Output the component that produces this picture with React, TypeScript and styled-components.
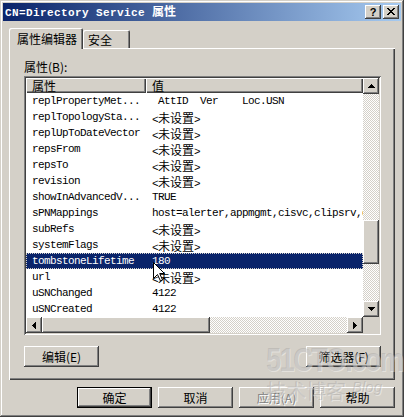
import React from "react";
import styled, { createGlobalStyle, css } from "styled-components";

const FACE = "#d4d0c8";
const CJK = `"Noto Sans CJK SC", "Noto Sans", sans-serif`;
const MONO = `"Liberation Mono", "Noto Sans CJK SC", monospace`;

const raised = css`
  box-shadow: inset -1px -1px #404040, inset 1px 1px #ffffff,
    inset -2px -2px #808080, inset 2px 2px ${FACE};
`;

const GlobalStyle = createGlobalStyle`
  html, body { margin: 0; padding: 0; background: ${FACE}; }
  body { font-family: ${CJK}; font-size: 12px; color: #000; }
  * { box-sizing: border-box; }
`;

const Window = styled.div`
  position: relative;
  width: 404px;
  height: 417px;
  background: ${FACE};
  padding: 3px;
  display: flex;
  flex-direction: column;
  overflow: hidden;
  box-shadow: inset -1px -1px #404040, inset 1px 1px ${FACE},
    inset -2px -2px #808080, inset 2px 2px #ffffff;
`;

const TitleBar = styled.div`
  height: 18px;
  flex: none;
  display: flex;
  align-items: center;
  justify-content: space-between;
  padding: 0 2px;
  background: linear-gradient(to right, #0a246a, #a6caf0);
`;

const TitleText = styled.div`
  color: #fff;
  font-weight: bold;
  font-family: ${CJK};
  font-size: 12px;
  line-height: 18px;
  white-space: pre;
`;

const TitleMono = styled.span`
  font-family: ${MONO};
  font-size: 11px;
  letter-spacing: 0.4px;
`;

const CaptionGroup = styled.div`
  display: flex;
  gap: 2px;
`;

const CaptionButton = styled.div`
  width: 16px;
  height: 14px;
  background: ${FACE};
  ${raised};
  display: flex;
  align-items: center;
  justify-content: center;
  font-family: "Liberation Sans", sans-serif;
  font-weight: bold;
  font-size: 11px;
  line-height: 14px;
  padding-bottom: 1px;
`;

const Body = styled.div`
  flex: 1;
  display: flex;
  flex-direction: column;
  padding: 7px 6px 0 6px;
`;

const TabRow = styled.div`
  height: 20px;
  display: flex;
  align-items: flex-end;
`;

const Tab = styled.div<{ $active?: boolean; $w: number; $pl: number }>`
  position: relative;
  z-index: ${(p) => (p.$active ? 1 : 0)};
  width: ${(p) => p.$w}px;
  height: ${(p) => (p.$active ? 21 : 18)}px;
  margin-bottom: ${(p) => (p.$active ? -1 : 0)}px;
  padding-left: ${(p) => p.$pl}px;
  padding-top: ${(p) => (p.$active ? 2 : 1)}px;
  line-height: 17px;
  background: ${FACE};
  border-radius: 2px 2px 0 0;
  box-shadow: inset 1px 1px #ffffff, inset -1px 0 #404040, inset -2px 0 #808080;
  font-size: 12px;
  white-space: nowrap;
`;

const Panel = styled.div`
  width: 386px;
  height: 332px;
  flex: none;
  display: flex;
  flex-direction: column;
  padding: 12px 14px 13px 15px;
  box-shadow: inset 1px 1px #ffffff, inset -1px -1px #404040,
    inset -2px -2px #808080;
`;

const FieldLabel = styled.div`
  height: 14px;
  line-height: 14px;
  margin-bottom: 2px;
  font-size: 12px;
`;

const ListBox = styled.div`
  width: 357px;
  height: 259px;
  padding: 2px;
  background: #fff;
  box-shadow: inset 1px 1px #808080, inset -1px -1px #ffffff,
    inset 2px 2px #404040, inset -2px -2px ${FACE};
  display: grid;
  grid-template-columns: 1fr 16px;
  grid-template-rows: 1fr 16px;
`;

const ListContent = styled.div`
  overflow: hidden;
  display: flex;
  flex-direction: column;
`;

const HeaderRow = styled.div`
  height: 15px;
  flex: none;
  display: grid;
  grid-template-columns: 120px 1fr;
`;

const HeaderCell = styled.div`
  background: ${FACE};
  box-shadow: inset 1px 1px #ffffff, inset -1px -1px #404040,
    inset -2px -2px #808080;
  padding-left: 6px;
  font-size: 12px;
  line-height: 15px;
  overflow: hidden;
`;

const Row = styled.div<{ $selected?: boolean }>`
  height: 16px;
  flex: none;
  display: grid;
  grid-template-columns: 120px 1fr;
  background: ${(p) => (p.$selected ? "#0a246a" : "#fff")};
  color: ${(p) => (p.$selected ? "#fff" : "#000")};
  outline: ${(p) => (p.$selected ? `1px dotted ${FACE}` : "none")};
  outline-offset: -1px;
`;

const Cell = styled.div`
  padding-left: 6px;
  padding-top: 1px;
  font-family: ${MONO};
  font-size: 11px;
  letter-spacing: -0.6px;
  line-height: 15px;
  white-space: pre;
  overflow: hidden;
`;

const Cjk = styled.span`
  font-family: ${CJK};
  font-size: 12px;
  letter-spacing: 0;
`;

const VScroll = styled.div`
  display: flex;
  flex-direction: column;
`;

const HScroll = styled.div`
  display: flex;
`;

const Track = styled.div<{ $size?: number }>`
  ${(p) => (p.$size ? `flex: 0 0 ${p.$size}px;` : "flex: 1;")}
  background-color: #fff;
  background-image: repeating-conic-gradient(${FACE} 0 25%, #fff 0 50%);
  background-size: 2px 2px;
`;

const Thumb = styled.div<{ $size: number }>`
  flex: 0 0 ${(p) => p.$size}px;
  background: ${FACE};
  ${raised};
`;

const ScrollButton = styled.div`
  flex: 0 0 16px;
  width: 16px;
  height: 16px;
  background: ${FACE};
  ${raised};
  display: flex;
  align-items: center;
  justify-content: center;
`;

const Corner = styled.div`
  background: ${FACE};
`;

const ButtonRow = styled.div`
  display: flex;
  justify-content: space-between;
  margin-top: 11px;
`;

const DialogButtons = styled.div`
  display: flex;
  justify-content: flex-end;
  gap: 6px;
  margin-top: 7px;
`;

const Button = styled.div<{ $default?: boolean; $disabled?: boolean }>`
  width: 75px;
  height: 21px;
  background: ${FACE};
  ${(p) =>
    p.$default
      ? css`
          box-shadow: inset 0 0 0 1px #000, inset -2px -2px #404040,
            inset 2px 2px #ffffff, inset -3px -3px #808080,
            inset 3px 3px ${FACE};
        `
      : raised};
  font-size: 12px;
  line-height: 21px;
  text-align: center;
  color: ${(p) => (p.$disabled ? "#808080" : "#000")};
  text-shadow: ${(p) => (p.$disabled ? "1px 1px #ffffff" : "none")};
`;

const Watermark = styled.div`
  position: absolute;
  left: 266px;
  top: 340px;
  pointer-events: none;
  color: rgba(150, 150, 150, 0.32);
  text-shadow: 1px 1px rgba(255, 255, 255, 0.4);
`;

const WmBig = styled.div`
  font-family: "Liberation Sans", sans-serif;
  font-weight: bold;
  font-size: 34px;
  line-height: 38px;
  letter-spacing: -2px;
  transform: scaleX(0.8);
  transform-origin: left center;
  white-space: nowrap;
`;

const WmSmall = styled.div`
  display: flex;
  align-items: flex-start;
  gap: 6px;
  font-size: 20px;
  line-height: 26px;
  white-space: nowrap;
`;

const WmBlog = styled.span`
  font-family: "Liberation Sans", sans-serif;
  font-style: italic;
  font-size: 15px;
  line-height: 18px;
`;

const Cursor = styled.svg`
  position: absolute;
  left: 153px;
  top: 262px;
  pointer-events: none;
`;

type Dir = "up" | "down" | "left" | "right";

const Arrow = ({ dir }: { dir: Dir }) => {
  const vertical = dir === "up" || dir === "down";
  const rot = { up: 0, down: 180, left: 0, right: 180 }[dir];
  return vertical ? (
    <svg width="7" height="4" viewBox="0 0 7 4" shapeRendering="crispEdges"
      style={{ transform: `rotate(${rot}deg)` }}>
      <path d="M3 0h1v1h-1z M2 1h3v1h-3z M1 2h5v1h-5z M0 3h7v1h-7z" fill="#000" />
    </svg>
  ) : (
    <svg width="4" height="7" viewBox="0 0 4 7" shapeRendering="crispEdges"
      style={{ transform: `rotate(${rot}deg)` }}>
      <path d="M0 3h1v1h-1z M1 2h1v3h-1z M2 1h1v5h-1z M3 0h1v7h-1z" fill="#000" />
    </svg>
  );
};

const NotSet = () => (
  <>
    {"<"}
    <Cjk>未设置</Cjk>
    {">"}
  </>
);

type Item = { name: string; value: React.ReactNode; selected?: boolean };

const items: Item[] = [
  { name: "replPropertyMet...", value: " AttID  Ver    Loc.USN" },
  { name: "replTopologySta...", value: <NotSet /> },
  { name: "replUpToDateVector", value: <NotSet /> },
  { name: "repsFrom", value: <NotSet /> },
  { name: "repsTo", value: <NotSet /> },
  { name: "revision", value: <NotSet /> },
  { name: "showInAdvancedV...", value: "TRUE" },
  { name: "sPNMappings", value: "host=alerter,appmgmt,cisvc,clipsrv,dcom" },
  { name: "subRefs", value: <NotSet /> },
  { name: "systemFlags", value: <NotSet /> },
  { name: "tombstoneLifetime", value: "180", selected: true },
  { name: "url", value: <NotSet /> },
  { name: "uSNChanged", value: "4122" },
  { name: "uSNCreated", value: "4122" },
];

export default function App() {
  return (
    <>
      <GlobalStyle />
      <Window>
        <TitleBar>
          <TitleText>
            <TitleMono>CN=Directory Service </TitleMono>属性
          </TitleText>
          <CaptionGroup>
            <CaptionButton>?</CaptionButton>
            <CaptionButton>
              <svg width="8" height="7" viewBox="0 0 8 7" shapeRendering="crispEdges">
                <path
                  d="M0 0h2v1h-2z M6 0h2v1h-2z M1 1h2v1h-2z M5 1h2v1h-2z M2 2h4v1h-4z M3 3h2v1h-2z M2 4h4v1h-4z M1 5h2v1h-2z M5 5h2v1h-2z M0 6h2v1h-2z M6 6h2v1h-2z"
                  fill="#000"
                />
              </svg>
            </CaptionButton>
          </CaptionGroup>
        </TitleBar>
        <Body>
          <TabRow>
            <Tab $active $w={74} $pl={8}>属性编辑器</Tab>
            <Tab $w={47} $pl={5}>安全</Tab>
          </TabRow>
          <Panel>
            <FieldLabel>属性(B):</FieldLabel>
            <ListBox>
              <ListContent>
                <HeaderRow>
                  <HeaderCell>属性</HeaderCell>
                  <HeaderCell>值</HeaderCell>
                </HeaderRow>
                {items.map((it) => (
                  <Row key={it.name} $selected={it.selected}>
                    <Cell>{it.name}</Cell>
                    <Cell>{it.value}</Cell>
                  </Row>
                ))}
              </ListContent>
              <VScroll>
                <ScrollButton><Arrow dir="up" /></ScrollButton>
                <Track $size={126} />
                <Thumb $size={44} />
                <Track />
                <ScrollButton><Arrow dir="down" /></ScrollButton>
              </VScroll>
              <HScroll>
                <ScrollButton><Arrow dir="left" /></ScrollButton>
                <Thumb $size={168} />
                <Track />
                <ScrollButton><Arrow dir="right" /></ScrollButton>
              </HScroll>
              <Corner />
            </ListBox>
            <ButtonRow>
              <Button>编辑(E)</Button>
              <Button>筛选器(F)</Button>
            </ButtonRow>
          </Panel>
          <DialogButtons>
            <Button $default>确定</Button>
            <Button>取消</Button>
            <Button $disabled>应用(A)</Button>
            <Button>帮助</Button>
          </DialogButtons>
        </Body>
        <Watermark>
          <WmBig>51CTO.com</WmBig>
          <WmSmall>
            技术博客<WmBlog>Blog</WmBlog>
          </WmSmall>
        </Watermark>
        <Cursor width="12" height="20" viewBox="0 0 12 20">
          <path d="M0.5 0.5 V16.5 L4.5 12.5 L7.5 19 L9.5 18 L6.7 11.5 H11.5 Z" fill="#fff" stroke="#000" strokeWidth="1" />
        </Cursor>
      </Window>
    </>
  );
}
